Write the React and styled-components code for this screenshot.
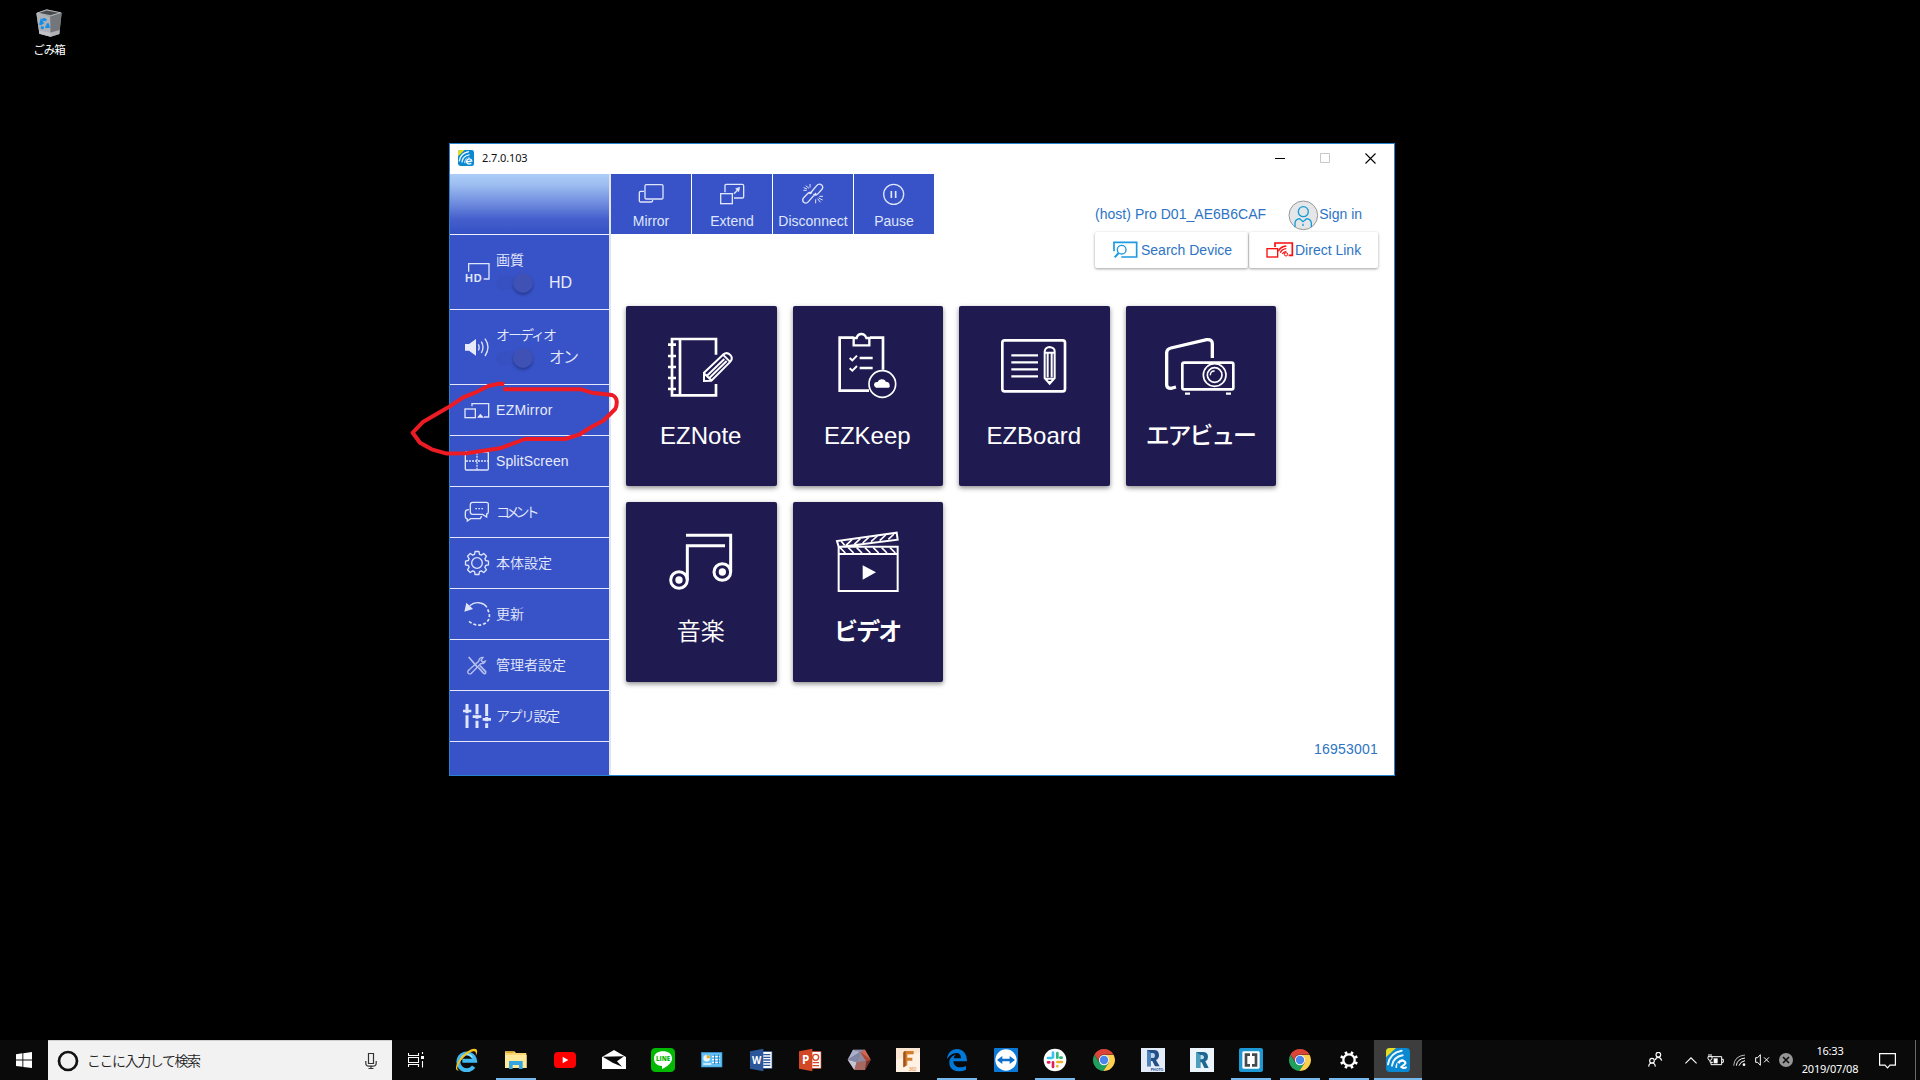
import React from "react";
import styled, { createGlobalStyle } from "styled-components";

const Global = createGlobalStyle`
  * { box-sizing: border-box; }
  body { margin: 0; background: #000; overflow: hidden; }
  svg { display: block; flex: none; }
`;

const latin = `"Liberation Sans", "Noto Sans CJK JP", sans-serif`;
const system = `"Noto Sans", "Noto Sans CJK JP", sans-serif`;

const Screen = styled.div`
  position: relative;
  display: flex;
  flex-direction: column;
  width: 1920px;
  height: 1080px;
  background: #000;
  overflow: hidden;
`;
const Desktop = styled.main`
  position: relative;
  flex: 1;
  min-height: 0;
`;
const Shortcut = styled.div`
  display: flex;
  flex-direction: column;
  align-items: center;
  width: 98px;
  padding-top: 9px;
  gap: 4px;
  color: #fff;
  font: 11.5px/18px ${system};
  letter-spacing: -1px;
`;
const Window = styled.section`
  position: absolute;
  left: 449px;
  top: 143px;
  width: 946px;
  height: 633px;
  display: flex;
  flex-direction: column;
  border: 1px solid #2383cf;
  background: #fff;
`;
const TitleBar = styled.header`
  display: flex;
  align-items: center;
  height: 30px;
  padding: 0 1px 2px 8px;
  font: 11px/28px ${system};
  color: #111;
`;
const Title = styled.span`
  flex: 1;
  margin-left: 8px;
  letter-spacing: -0.12px;
`;
const Body = styled.div`
  display: flex;
  flex: 1;
  min-height: 0;
`;
const Sidebar = styled.nav`
  width: 161px;
  flex: none;
  border-right: 2px solid #e2e5ee;
  background: #3853c8;
`;
const Banner = styled.div`
  height: 61px;
  border-bottom: 1px solid #eef1fb;
  background: linear-gradient(#abcdf8 0%, #9dbdf1 18%, #6d8ade 50%, #4560cd 75%, #3550c4 100%);
`;
const Item = styled.div`
  display: flex;
  align-items: center;
  height: ${(p) => (p.$tall ? 75 : 51)}px;
  padding-left: 13px;
  border-bottom: 1px solid #e4e8f8;
  color: #e6eafa;
  font: 350 14px/20px ${latin};
`;
const ItemText = styled.span`
  margin-left: 5px;
  letter-spacing: ${(p) => p.$track || 0}px;
  white-space: nowrap;
`;
const Setting = styled.div`
  display: flex;
  flex-direction: column;
  margin: 2px 0 0 5px;
`;
const SettingName = styled.span`
  letter-spacing: ${(p) => p.$track || 0}px;
`;
const SettingValue = styled.div`
  display: flex;
  align-items: center;
  height: 27px;
  font-size: 16px;
  letter-spacing: ${(p) => p.$track || 0}px;
`;
const Switch = styled.i`
  display: flex;
  justify-content: flex-end;
  align-items: center;
  width: 37px;
  height: 14px;
  margin-right: 16px;
  border-radius: 7px;
  background: linear-gradient(90deg, #3650c0, #3853c8);
  &::after {
    content: "";
    width: 20px;
    height: 20px;
    border-radius: 50%;
    background: #3f51b5;
    box-shadow: 0 2px 3px rgba(0, 0, 40, 0.32);
  }
`;
const Content = styled.div`
  display: flex;
  flex-direction: column;
  flex: 1;
`;
const Top = styled.div`
  display: flex;
  justify-content: space-between;
  height: 132px;
  padding-right: 15px;
`;
const Tools = styled.div`
  display: flex;
  gap: 1px;
  height: 60px;
`;
const Tool = styled.div`
  width: 80px;
  background: #3853c8;
  color: #dfe5fa;
  font: 14px/26px ${latin};
  text-align: center;
`;
const ToolLabel = styled.div`
  height: 26px;
  white-space: nowrap;
`;
const Account = styled.div`
  width: 284px;
  padding-top: 24px;
  color: #2d74c4;
  font: 14px/32px ${latin};
`;
const AccountRow = styled.div`
  display: flex;
  align-items: center;
  height: 34px;
`;
const Name = styled.span`
  width: ${(p) => p.$width || 60}px;
  padding-bottom: 3px;
  letter-spacing: ${(p) => p.$track || 0}px;
  white-space: nowrap;
`;
const Raised = styled.div`
  display: flex;
  align-items: center;
  width: ${(p) => p.$width}px;
  height: 36px;
  margin: 2px 1px 0 0;
  padding-left: ${(p) => p.$pad}px;
  border-radius: 2px;
  white-space: nowrap;
  box-shadow: 0 1px 3px rgba(0, 0, 0, 0.38);
`;
const Grid = styled.div`
  display: grid;
  grid-template-columns: repeat(4, 150.5px);
  grid-auto-rows: 180px;
  gap: 16px;
  padding-left: 15px;
`;
const Card = styled.div`
  display: flex;
  flex-direction: column;
  align-items: center;
  border-radius: 2px;
  background: #1f1b50;
  color: #fff;
  box-shadow: 0 2px 5px rgba(0, 0, 0, 0.45);
`;
const CardLabel = styled.div`
  font: ${(p) => p.$weight || 400} 24px/32px ${latin};
  letter-spacing: ${(p) => p.$track || 0}px;
  padding: 10px 1px 0 0;
  white-space: nowrap;
`;
const Code = styled.div`
  margin-top: auto;
  padding: 0 16px 16px 0;
  text-align: right;
  color: #2d74c4;
  font: 14px/20px ${latin};
  letter-spacing: 0.2px;
`;
const Annotation = styled.svg`
  position: absolute;
  left: 0;
  top: 0;
  pointer-events: none;
`;
const Taskbar = styled.footer`
  display: flex;
  height: 40px;
  background: #0a0a0a;
  color: #fff;
`;
const Slot = styled.div`
  display: flex;
  align-items: center;
  justify-content: center;
  width: ${(p) => p.$width || 48}px;
  height: 40px;
  flex: none;
`;
const Search = styled.div`
  display: flex;
  align-items: center;
  width: 344px;
  padding: 0 15px 0 9px;
  border-top: 1px solid #cfcfcf;
  background: #f2f2f2;
  color: #222;
  font: 350 14px/20px "Noto Sans CJK JP", sans-serif;
  letter-spacing: -1.45px;
`;
const SearchText = styled.span`
  flex: 1;
  margin-left: 8px;
  padding-bottom: 2px;
`;
const Apps = styled.div`
  display: flex;
  gap: 1px;
  margin-left: 3px;
`;
const AppButton = styled.div`
  display: flex;
  flex-direction: column;
  align-items: center;
  width: 48px;
  height: 40px;
  padding-top: 8px;
  background: ${(p) => (p.$active ? "#3d3d3d" : "transparent")};
  &::after {
    content: "";
    width: ${(p) => (p.$active ? 48 : p.$open ? 40 : 0)}px;
    height: 2px;
    margin-top: 6px;
    background: #76b9ed;
  }
`;
const Tray = styled.div`
  display: flex;
  margin-left: auto;
  padding-right: 4px;
`;
const Clock = styled.div`
  display: flex;
  flex-direction: column;
  align-items: center;
  width: 64px;
  padding: 2px 2px 0 0;
  font: 11px/18px ${system};
  letter-spacing: -0.2px;
`;
const ShowDesktop = styled.div`
  width: 1px;
  margin-left: 4px;
  background: #686868;
`;

const Svg = ({ w, h, box, children, stroke = "none", sw = 1 }) => (
  <svg width={w} height={h} viewBox={box} fill="none" stroke={stroke} strokeWidth={sw}>{children}</svg>
);
const SideIcon = ({ y, h = 150, children }) => (
  <Svg w={28} h={h / 3} box={`189 ${y} 84 ${h}`} stroke="#dfe5fa" sw={4}>{children}</Svg>
);
const Task = ({ children }) => <Svg w={24} h={24} box="0 0 72 72">{children}</Svg>;

const EzLogo = ({ size, letter = "e" }) => (
  <svg width={size} height={size} viewBox="0 0 72 72" fill="none">
    <rect width="72" height="72" rx="11" fill="#0a88d0" />
    <path d="M0 28V11Q0 0 11 0H30Z" fill="#e8dc1e" />
    <path d="M6 49Q12 14 47 8M18 53Q22 27 50 22M31 57Q33 40 50 36" stroke="#e9f7fd" strokeWidth="6" strokeLinecap="round" />
    <path d="M34 72L34 46Q42 32 56 36L72 50V61Q72 72 61 72Z" fill="#0a88d0" />
    {letter === "e" ? (
      <path d="M39 54L62 49Q60 39 50 40Q38 43 39 54Q42 67 60 60" stroke="#fff" strokeWidth="6" />
    ) : (
      <path d="M38 46Q42 36 53 39Q62 43 56 49L46 57Q53 63 62 57" stroke="#fff" strokeWidth="6" />
    )}
  </svg>
);

const Chrome = () => (
  <Task>
    <path d="M7.4 19.5A33 33 0 0 0 34 69L50 44L36 36L22 44Z" fill="#1fa15d" />
    <path d="M36 20H64.6A33 33 0 0 1 34 69L50 44Z" fill="#fdd04e" />
    <path d="M7.4 19.5A33 33 0 0 1 64.6 19.5H36A16 16 0 0 0 21 41Z" fill="#db4437" />
    <circle cx="36" cy="36" r="15.5" fill="#f4f4f4" />
    <circle cx="36" cy="36" r="12.5" fill="#4a86ee" />
  </Task>
);

const gearPath = (cx, cy, ro, ri, n) => {
  const pts = [];
  for (let i = 0; i < n; i++) {
    const a = (i / n) * Math.PI * 2 - Math.PI / 2;
    const s = Math.PI / n;
    [[-0.72, ri], [-0.42, ro], [0.42, ro], [0.72, ri]].forEach(([k, r]) =>
      pts.push(`${(cx + r * Math.cos(a + k * s)).toFixed(1)} ${(cy + r * Math.sin(a + k * s)).toFixed(1)}`)
    );
  }
  return `M${pts.join("L")}Z`;
};

const Office = ({ color, letter, children }) => (
  <Task>
    <rect x="34" y="11" width="35" height="50" fill="#fff" stroke={color} strokeWidth="2" />
    {children}
    <path d="M3 10L43 2V70L3 62Z" fill={color} />
    <text x="23" y="47" textAnchor="middle" fill="#fff" fontFamily="Open Sans, sans-serif" fontWeight="700" fontSize={letter === "W" ? 29 : 35}>{letter}</text>
  </Task>
);

const apps = [
  { icon: <Task>
      <path d="M56 56A25 25 0 1 1 60 38H22" stroke="#43b9ef" strokeWidth="12" />
      <path d="M18 32A19 19 0 0 1 52 28" stroke="#9be5fd" strokeWidth="4" />
      <path d="M14 66C0 72 0 56 10 40C23 17 53-4 64 4C70 9 64 20 62 24C64 14 62 8 55 10C41 12 21 31 11 49C4 62 7 67 14 66Z" fill="#f6c51d" />
    </Task> },
  { open: true, icon: <Task>
      <path d="M3 10H31L36 15H67V60H3Z" fill="#f8d775" /><path d="M3 21H68V60H3Z" fill="#ffe99a" />
      <path d="M5 13H29" stroke="#e7a92a" strokeWidth="4" />
      <path d="M15 63V39H56V63H45V51H26V63Z" fill="#36a5df" />
    </Task> },
  { icon: <Task><rect x="3" y="12" width="66" height="48" rx="12" fill="#f00" /><path d="M29 26L46 36L29 46Z" fill="#fff" /></Task> },
  { icon: <Task><path d="M0 27L36 6L72 27V63H0Z" fill="#fff" /><path d="M2 26L66 25L45 40L60 56L32 44Z" fill="#0a0a0a" /></Task> },
  { icon: <Task><rect width="72" height="72" rx="13" fill="#00b900" /><path d="M63 32C63 17 51 10 36 10S9 17 9 32C9 45 19 53 33 54L33 63C45 57 63 46 63 32Z" fill="#fff" />
      <text x="36" y="39" textAnchor="middle" fontFamily="Open Sans, sans-serif" fontWeight="800" fontSize="18" fill="#00b900">LINE</text></Task> },
  { icon: <Task><rect x="4" y="13" width="62" height="44" fill="#64c0f4" stroke="#2e8ccc" strokeWidth="2" />
      <circle cx="20" cy="31" r="10" fill="#e9f7ff" /><path d="M20 31V21A10 10 0 0 1 30 31Z" fill="#f3a724" />
      <path d="M36 26H59M36 35H59M36 43H59" stroke="#fff" strokeWidth="4" /><path d="M10 48H34" stroke="#fff" strokeWidth="4" />
      <path d="M44 20V48M55 20V48" stroke="#1d79b5" strokeWidth="3" /></Task> },
  { icon: <Office color="#2b579a" letter="W"><path d="M43 20H64M43 28H64M43 36H64M43 44H64M43 52H64" stroke="#2b579a" strokeWidth="4" /></Office> },
  { icon: <Office color="#d24726" letter="P"><circle cx="53" cy="28" r="9" stroke="#d24726" strokeWidth="4" /><path d="M44 44H63M44 53H63" stroke="#d24726" strokeWidth="4" /></Office> },
  { icon: <Task>
      <path d="M2 35L18 5L54 5L71 35L54 66L22 66Z" fill="#885b60" />
      <path d="M2 35L18 5L40 12Z" fill="#a8b0cc" /><path d="M18 5L54 5L40 12Z" fill="#8991b3" />
      <path d="M54 5L71 35L40 12Z" fill="#cf6a51" /><path d="M2 35L40 12L29 43Z" fill="#7f87a8" />
      <path d="M40 12L58 40L29 43Z" fill="#8f8a9e" /><path d="M40 12L71 35L58 40Z" fill="#b74732" />
      <path d="M2 35L29 43L22 66Z" fill="#c3c5d3" /><path d="M29 43L58 40L54 66L22 66Z" fill="#a86862" /><path d="M58 40L71 35L54 66Z" fill="#792f2d" />
    </Task> },
  { icon: <Task><rect width="72" height="72" fill="#fbe6d2" /><path d="M0 36L72 12V72H0Z" fill="#fff1e3" /><path d="M22 58V16Q22 9 29 9H53V19H34V29H49V38H34V52Z" fill="#d47d2b" /><path d="M22 58V16Q22 9 29 9V54Z" fill="#9d5420" />
      <text x="38" y="68" fontSize="14" fontFamily="Liberation Sans, sans-serif" fill="#e38b43">360</text></Task> },
  { open: true, icon: <Task><path d="M6 34C8 13 21 3 36 3C55 3 66 18 66 40H25C26 53 36 59 47 58Q56 58 63 54V65Q55 70 44 70C24 70 13 59 13 44C13 30 21 23 32 20Q26 25 26 31H48C48 20 43 15 34 15C23 15 12 24 6 34Z" fill="#0078d7" /></Task> },
  { icon: <Task><rect width="72" height="72" rx="2" fill="#0c78d6" /><circle cx="36" cy="36" r="32" fill="#fff" /><path d="M9 36L25 24V32H47V24L63 36L47 48V40H25V48Z" fill="#0e6fc9" /></Task> },
  { open: true, icon: <Task><circle cx="36" cy="36" r="34" fill="#fff" /><g strokeWidth="8" strokeLinecap="round">
      <path d="M30 14V28M15 30H25" stroke="#36c5f0" /><path d="M43 15V29M56 29H52" stroke="#2eb67d" />
      <path d="M43 42H57M43 54V55" stroke="#ecb22e" /><path d="M30 43V57M15 43H19" stroke="#e01e5a" /></g></Task> },
  { icon: <Chrome /> },
  { icon: <Task><rect width="72" height="72" fill="#e4ecfa" /><path d="M18 55V6H39Q54 6 54 22Q54 32 45 36L56 55H42L34 39H30V55Z" fill="#234f87" /><path d="M30 15H36Q42 16 42 23T36 30H30Z" fill="#bcd5ef" /><path d="M18 6L30 15V55H18Z" fill="#4e83bb" />
      <text x="29" y="69" fontSize="13" fontWeight="700" fontFamily="Liberation Sans, sans-serif" fill="#174a91" textLength="38" lengthAdjust="spacingAndGlyphs">PHOTO</text></Task> },
  { icon: <Task><rect width="72" height="72" fill="#ecf5fc" /><path d="M19 60V12H39Q54 12 54 27Q54 36 46 40L56 60H43L35 43H31V60Z" fill="#1d6791" /><path d="M31 21H36Q42 22 42 28T36 34H31Z" fill="#c4e0ef" /><path d="M19 12L31 21V60H19Z" fill="#4ba0c0" /></Task> },
  { open: true, icon: <Task><rect width="72" height="72" rx="6" fill="#1d98d3" /><rect x="10" y="10" width="52" height="52" rx="4" fill="#fff" /><path d="M33 20H21V52H33M39 20H51V52H39" stroke="#46494e" strokeWidth="8" /></Task> },
  { open: true, icon: <Chrome /> },
  { open: true, icon: <Task><circle cx="36" cy="36" r="17" stroke="#fff" strokeWidth="7" /><g stroke="#fff" strokeWidth="8">{[22.5, 67.5, 112.5, 157.5, 202.5, 247.5, 292.5, 337.5].map((a) => <path key={a} d="M36 17V9" transform={`rotate(${a} 36 36)`} />)}</g></Task> },
  { active: true, icon: <EzLogo size={24} letter="z" /> },
];

const W = "#fff";
const cards = [
  { label: "EZNote", icon: <Svg w={151} h={104} box="48 48 453 312" stroke={W} sw={8}>
      <path d="M318 194V147H186V316H318V282M210 147V316" />
      <path d="M174 164H198M174 198H198M174 231H198M174 264H198M174 297H198" />
      <path d="M282 248L339 194Q352 184 362 196Q370 206 359 217L304 272L282 273ZM282 250L304 271M341 196L359 214M291 257L343 207M298 264L350 213" strokeWidth="6" />
    </Svg> },
  { label: "EZKeep", icon: <Svg w={151} h={104} box="547 48 453 312" stroke={W} sw={8}>
      <path d="M732 143H690V302H778M781 143H820V239" />
      <path d="M732 144V166H779V144H770Q766 132 755 132T741 144Z" strokeWidth="7" />
      <path d="M750 204H789M750 234H789" strokeWidth="8" /><path d="M720 204L728 211L742 197M720 235L728 242L742 228" strokeWidth="6" />
      <circle cx="818" cy="282" r="40" strokeWidth="5" />
      <path d="M799 293Q792 291 793 283T804 276Q807 267 817 268T828 275Q839 275 840 285Q842 291 837 293Z" fill={W} stroke="none" />
    </Svg> },
  { label: "EZBoard", icon: <Svg w={151} h={104} box="27 48 453 312" stroke={W} sw={7}>
      <rect x="157" y="151" width="188" height="153" rx="7" strokeWidth="8" />
      <path d="M184 196H264M184 217H264M184 238H264M184 259H264" />
      <path d="M284 264V184Q286 172 299 171Q314 173 314 184V264L299 281ZM284 188H314M293 189V262M305 189V262M284 266H314" strokeWidth="6" /><path d="M292 273H306L299 284Z" fill={W} stroke="none" />
    </Svg> },
  { label: "エアビュー", weight: 500, track: -2.2, icon: <Svg w={151} h={104} box="528 48 453 312" stroke={W} sw={10}>
      <path d="M681 291L666 295Q653 295 653 284V189Q653 177 666 174L773 149Q790 147 790 161V204" />
      <rect x="700" y="218" width="153" height="80" rx="5" strokeWidth="8" />
      <circle cx="797" cy="255" r="34" fill="#1f1b50" strokeWidth="5" /><circle cx="797" cy="255" r="22" strokeWidth="5" /><path d="M784 256Q784 242 797 243" strokeWidth="4" />
      <path d="M708 311H723M831 311H846" strokeWidth="7" />
    </Svg> },
  { label: "音楽", weight: 350, track: 0, icon: <Svg w={151} h={104} box="48 36 453 312" stroke={W} sw={9}>
      <path d="M228 136H362V246M345 167H232V270" /><circle cx="207" cy="270" r="25" /><circle cx="337" cy="246" r="25" />
      <circle cx="207" cy="270" r="11" fill={W} stroke="none" /><circle cx="337" cy="246" r="11" fill={W} stroke="none" />
    </Svg> },
  { label: "ビデオ", weight: 700, track: -1.8, icon: <Svg w={151} h={104} box="547 36 453 312" stroke={W} sw={6}>
      <path d="M687 170H864V303H687ZM687 192H864M687 170L682 153L861 128L864 149L690 171" />
      <path d="M694 153L705 166M709 166L727 149M734 163L752 146M759 159L777 142M784 155L803 138M810 152L828 135M836 148L853 132" strokeWidth="5" />
      <path d="M691 173L707 189M716 173L732 189M741 173L757 189M766 173L782 189M791 173L807 189M816 173L832 189M841 173L857 189" strokeWidth="5" />
      <path d="M759 226L799 247L759 269Z" fill={W} stroke="none" />
    </Svg> },
];

const tools = [
  ["Mirror", <g><rect x="135" y="134" width="54" height="43" rx="4" /><path d="M132 154H122Q118 154 118 158V182Q118 186 122 186H154Q158 186 158 180" /></g>],
  ["Extend", <g><path d="M375 157V136Q375 133 378 133H427Q431 133 431 137V170Q431 174 427 174H402" /><rect x="362" y="161" width="35" height="30" /><path d="M402 161L416 147" /><path d="M407 146L419 142L416 155Z" fill="#dfe5fa" strokeWidth="2" /></g>],
  ["Disconnect", <g><path d="M629 162L650 137Q657 129 665 135Q672 142 664 150L652 163Q646 168 640 163M648 159L626 184Q619 193 611 187Q605 180 611 173L624 160Q630 155 636 160" /><path d="M611 143L621 147M617 137L627 145M630 132V143M610 151H620M647 178V190M653 176L661 187M656 174L668 180M658 169H669" strokeWidth="3" /></g>],
  ["Pause", <g><circle cx="881" cy="163" r="30" /><path d="M874 153V174M887 153V174" strokeWidth="5" /></g>],
];

const menu = [
  ["EZMirror", 0.3, 15, <g><path d="M216 79V71H266V111H252" /><rect x="195" y="87" width="31" height="26" /><path d="M231 113L241 101L252 113Z" fill="#e6eafa" stroke="none" /></g>],
  ["SplitScreen", 0.1, 168, <g><rect x="196" y="216" width="69" height="54" rx="3" /><path d="M198 243H264M231 218V270" strokeDasharray="6 3" /></g>],
  ["コメント", -4.2, 321, <g><path d="M218 367H259Q265 367 265 373V395Q265 401 260 402V411L248 403H218Q211 403 211 396V374Q211 367 218 367Z" /><path d="M207 389Q196 389 196 397V409Q196 416 202 417V423L212 416H241L245 408" /><path d="M226 386H231M235 386H240M244 386H249" /></g>],
  ["本体設定", 0, 474, <g><path d={gearPath(231, 549, 35, 27, 8)} strokeLinejoin="round" /><circle cx="231" cy="549" r="16" /></g>],
  ["更新", 0, 627, <g><path d="M209 677Q224 665 241 669Q253 671 261 682" /><path d="M263 688Q276 715 257 729Q233 744 207 724" strokeDasharray="9 6" strokeWidth="5" /><path d="M199 668L219 687L193 695Z" fill="#dfe5fa" stroke="none" /></g>],
  ["管理者設定", 0, 780, <g opacity=".75" strokeWidth="4"><path d="M206 831L233 862M235 862L249 878Q257 886 257 875L240 857" strokeWidth="5" /><path d="M212 882L242 851Q253 852 256 843L248 846L243 841L249 832Q237 832 236 844L209 868Q199 875 206 881Q216 883 216 876" /></g>],
  ["アプリ設定", -1.5, 933, <g strokeWidth="8"><path d="M201 972V1044M231 972V1044M260 972V1044" strokeWidth="9" /><path d="M201 1000V1006M231 1003V1006M231 1016V1022M260 1008V1011M260 1024V1030" stroke="#3853c8" strokeWidth="12" /><path d="M189 993H214M218 1010H244M248 1018H273" strokeWidth="8" /></g>],
];

export default function App() {
  return (
    <Screen>
      <Global />
      <Desktop>
        <Shortcut>
          <Svg w={26} h={28} box="0 0 78 84">
            <path d="M1 12L32 1L77 11L70 75L44 83L10 74Z" fill="#8b8f94" />
            <path d="M1 12L43 23L44 83L10 74Z" fill="#aeb2b6" /><path d="M43 23L77 11L70 75L44 83Z" fill="#73777b" />
            <path d="M4 12L32 3L74 11L43 20Z" fill="#484b4e" stroke="#d6d8da" strokeWidth="2" />
            <path d="M9 65L42 71L71 63L70 75L44 83L10 74Z" fill="#c9cbce" opacity=".7" />
            <path d="M13 48L16 37L21 45M20 34Q25 28 30 35M34 43L37 53L28 54M23 58L15 54" stroke="#168ee8" strokeWidth="8" />
          </Svg>
          <span>ごみ箱</span>
        </Shortcut>
        <Window>
          <TitleBar>
            <EzLogo size={16} />
            <Title>2.7.0.103</Title>
            <Slot $width={45}><Svg w={10} h={1} box="0 0 10 1"><path d="M0 .5H10" stroke="#000" /></Svg></Slot>
            <Slot $width={45}><Svg w={10} h={10} box="0 0 10 10"><path d="M.5 .5H9.5V9.5H.5Z" stroke="#c8c8c8" /></Svg></Slot>
            <Slot $width={46}><Svg w={11} h={11} box="0 0 11 11"><path d="M.5 .5L10.5 10.5M10.5 .5L.5 10.5" stroke="#000" strokeWidth="1.1" /></Svg></Slot>
          </TitleBar>
          <Body>
            <Sidebar>
              <Banner />
              <Item $tall>
                <SideIcon y={315} h={222}><path d="M206 425V401H267V447H251" /><text x="195" y="456" fontFamily="Liberation Sans, sans-serif" fontSize="33" fontWeight="700" fill="#dfe5fa" stroke="none" textLength="50">HD</text></SideIcon>
                <Setting><SettingName>画質</SettingName><SettingValue><Switch />HD</SettingValue></Setting>
              </Item>
              <Item $tall>
                <SideIcon y={540} h={222}><path d="M195 642H207L228 627V677L207 662H195Z" fill="#e6eafa" stroke="none" /><path d="M235 643Q240 652 235 661M244 635Q254 652 244 669M255 626Q273 652 255 678" /></SideIcon>
                <Setting><SettingName $track={-2}>オーディオ</SettingName><SettingValue $track={-1.9}><Switch />オン</SettingValue></Setting>
              </Item>
              {menu.map(([label, track, y, icon]) => (
                <Item key={label}><SideIcon y={y}>{icon}</SideIcon><ItemText $track={track}>{label}</ItemText></Item>
              ))}
            </Sidebar>
            <Content>
              <Top>
                <Tools>
                  {tools.map(([label, icon], i) => (
                    <Tool key={label}><Svg w={80} h={34} box={`${33 + 243 * i} 102 240 102`} stroke="#dfe5fa" sw={4}>{icon}</Svg><ToolLabel>{label}</ToolLabel></Tool>
                  ))}
                </Tools>
                <Account>
                  <AccountRow>
                    <Name $width={194} $track={0.03}>(host) Pro D01_AE6B6CAF</Name>
                    <Svg w={31} h={31} box="626 179 93 93"><circle cx="672" cy="225" r="43" fill="#e5e6e7" stroke="#999" strokeWidth="3" /><g stroke="#159bd8" strokeWidth="4"><circle cx="672" cy="214" r="15" /><path d="M647 261V248Q648 237 661 235L671 244L682 235Q695 237 696 248V261M671 250V257" /></g></Svg>
                    <Name>Sign in</Name>
                  </AccountRow>
                  <AccountRow>
                    <Raised $width={153} $pad={18}><Svg w={28} h={18} box="101 306 84 54" stroke="#1b9ae0" sw={4}><path d="M104 337V310H172V354H126" strokeWidth="5" /><circle cx="127" cy="332" r="13" /><path d="M118 342L106 355" strokeWidth="6" /></Svg>Search Device</Raised>
                    <Raised $width={129} $pad={17}><Svg w={29} h={18} box="560 308 87 54" stroke="#f90d0d" sw={4}><rect x="563" y="331" width="32" height="25" /><path d="M587 326V314H639V351H628" strokeWidth="5" /><path d="M597 339Q604 324 621 323M603 343Q608 332 621 331M609 347Q613 340 621 339" strokeWidth="4" /><circle cx="620" cy="348" r="5" strokeWidth="3" /></Svg>Direct Link</Raised>
                  </AccountRow>
                </Account>
              </Top>
              <Grid>
                {cards.map((c) => (
                  <Card key={c.label}>{c.icon}<CardLabel $weight={c.weight} $track={c.track}>{c.label}</CardLabel></Card>
                ))}
              </Grid>
              <Code>16953001</Code>
            </Content>
          </Body>
        </Window>
        <Annotation width="640" height="480" viewBox="0 0 640 480" fill="none">
          <path d="M503.3 389.3H581L591.7 392.7L612 395Q616.7 397 616.7 401.7Q617 406 615 409.3L603.3 420.7L591.7 426.7L580 434.3L565 439H525L500 448.3L466.7 453.3L446.7 453.6L431.7 449.3L420 442.7L412.7 432.7L423.3 421.7L448.3 407.3L463.3 397.3L475 392.7L488.3 386L500 383.5L504.3 384.3" stroke="#ed1c24" strokeWidth="4" strokeLinejoin="round" />
        </Annotation>
      </Desktop>
      <Taskbar>
        <Slot><Svg w={16} h={16} box="0 0 16 16"><path d="M0 2.2L6.4 1.3V7.6H0ZM7.3 1.2L16 0V7.6H7.3ZM0 8.5H6.4V14.8L0 13.9ZM7.3 8.5H16V16L7.3 14.9Z" fill="#fff" /></Svg></Slot>
        <Search>
          <Svg w={22} h={22} box="0 0 22 22"><circle cx="11" cy="11" r="9" stroke="#111" strokeWidth="2.7" /></Svg>
          <SearchText>ここに入力して検索</SearchText>
          <Svg w={12} h={18} box="0 0 12 18" stroke="#333"><path d="M3.5 1.5H8.5V11.5H3.5ZM.8 9V11Q.8 14.2 4 14.2H8Q11.2 14.2 11.2 11V9M6 14.5V16.5M3.5 16.5H8.5" strokeWidth="1.2" /></Svg>
        </Search>
        <Slot><Svg w={16} h={16} box="0 0 16 16" stroke="#fff"><path d="M.5 1V3.5H10.5V1M.5 15V12.5H10.5V15M.5 5.5H10.5V10.5H.5ZM14.5 0V2M14.5 9V15.5" strokeWidth="1.1" /><path d="M13 4H16V7H13Z" fill="#fff" stroke="none" /></Svg></Slot>
        <Apps>
          {apps.map((a, i) => <AppButton key={i} $open={a.open} $active={a.active}>{a.icon}</AppButton>)}
        </Apps>
        <Tray>
          <Slot $width={46}><Svg w={15} h={16} box="144 66 45 48" stroke="#fff" sw={3.5}><circle cx="175" cy="74" r="7" /><circle cx="156" cy="92" r="7" /><path d="M146 110Q147 99 156 99T166 110M166 90Q168 82 175 82T185 92" /></Svg></Slot>
          <Slot $width={26}><Svg w={12} h={7} box="0 0 12 7" stroke="#fff"><path d="M.4 6.4L6 .9L11.6 6.4" strokeWidth="1.2" /></Svg></Slot>
          <Slot $width={22}><Svg w={17} h={12} box="320 71 51 36" stroke="#fff" sw={3}><path d="M334 79H364V103H332V94M364 87H369V96H364M323 79H335V84Q335 90 329 90T323 84ZM326 79V71M332 79V71M329 90V96H338" /><path d="M340 84H352V99H340Z" fill="#fff" stroke="none" /></Svg></Slot>
          <Slot $width={26}><Svg w={13} h={13} box="401 74 39 39" stroke="#fff" sw={3}><path d="M403 109Q405 80 437 77" opacity=".7" /><path d="M411 109Q413 89 437 86M419 109Q422 97 437 94" /><circle cx="434" cy="106" r="4" fill="#fff" stroke="none" /></Svg></Slot>
          <Slot $width={20}><Svg w={15} h={12} box="464 73 45 36" stroke="#fff" sw={3}><path d="M466 84H472L480 75V107L472 98H466ZM491 83L506 98M506 83L491 98" /></Svg></Slot>
          <Slot $width={27}><Svg w={14} h={14} box="0 0 14 14"><circle cx="7" cy="7" r="7" fill="#969696" /><path d="M4 4L10 10M10 4L4 10" stroke="#111" strokeWidth="1.7" /></Svg></Slot>
          <Clock><span>16:33</span><span>2019/07/08</span></Clock>
          <Slot><Svg w={17} h={17} box="0 0 17 17" stroke="#fff"><path d="M.6 1.6H16.4V13.2H11L8.5 15.8L6 13.2H.6Z" strokeWidth="1.2" /></Svg></Slot>
          <ShowDesktop />
        </Tray>
      </Taskbar>
    </Screen>
  );
}
